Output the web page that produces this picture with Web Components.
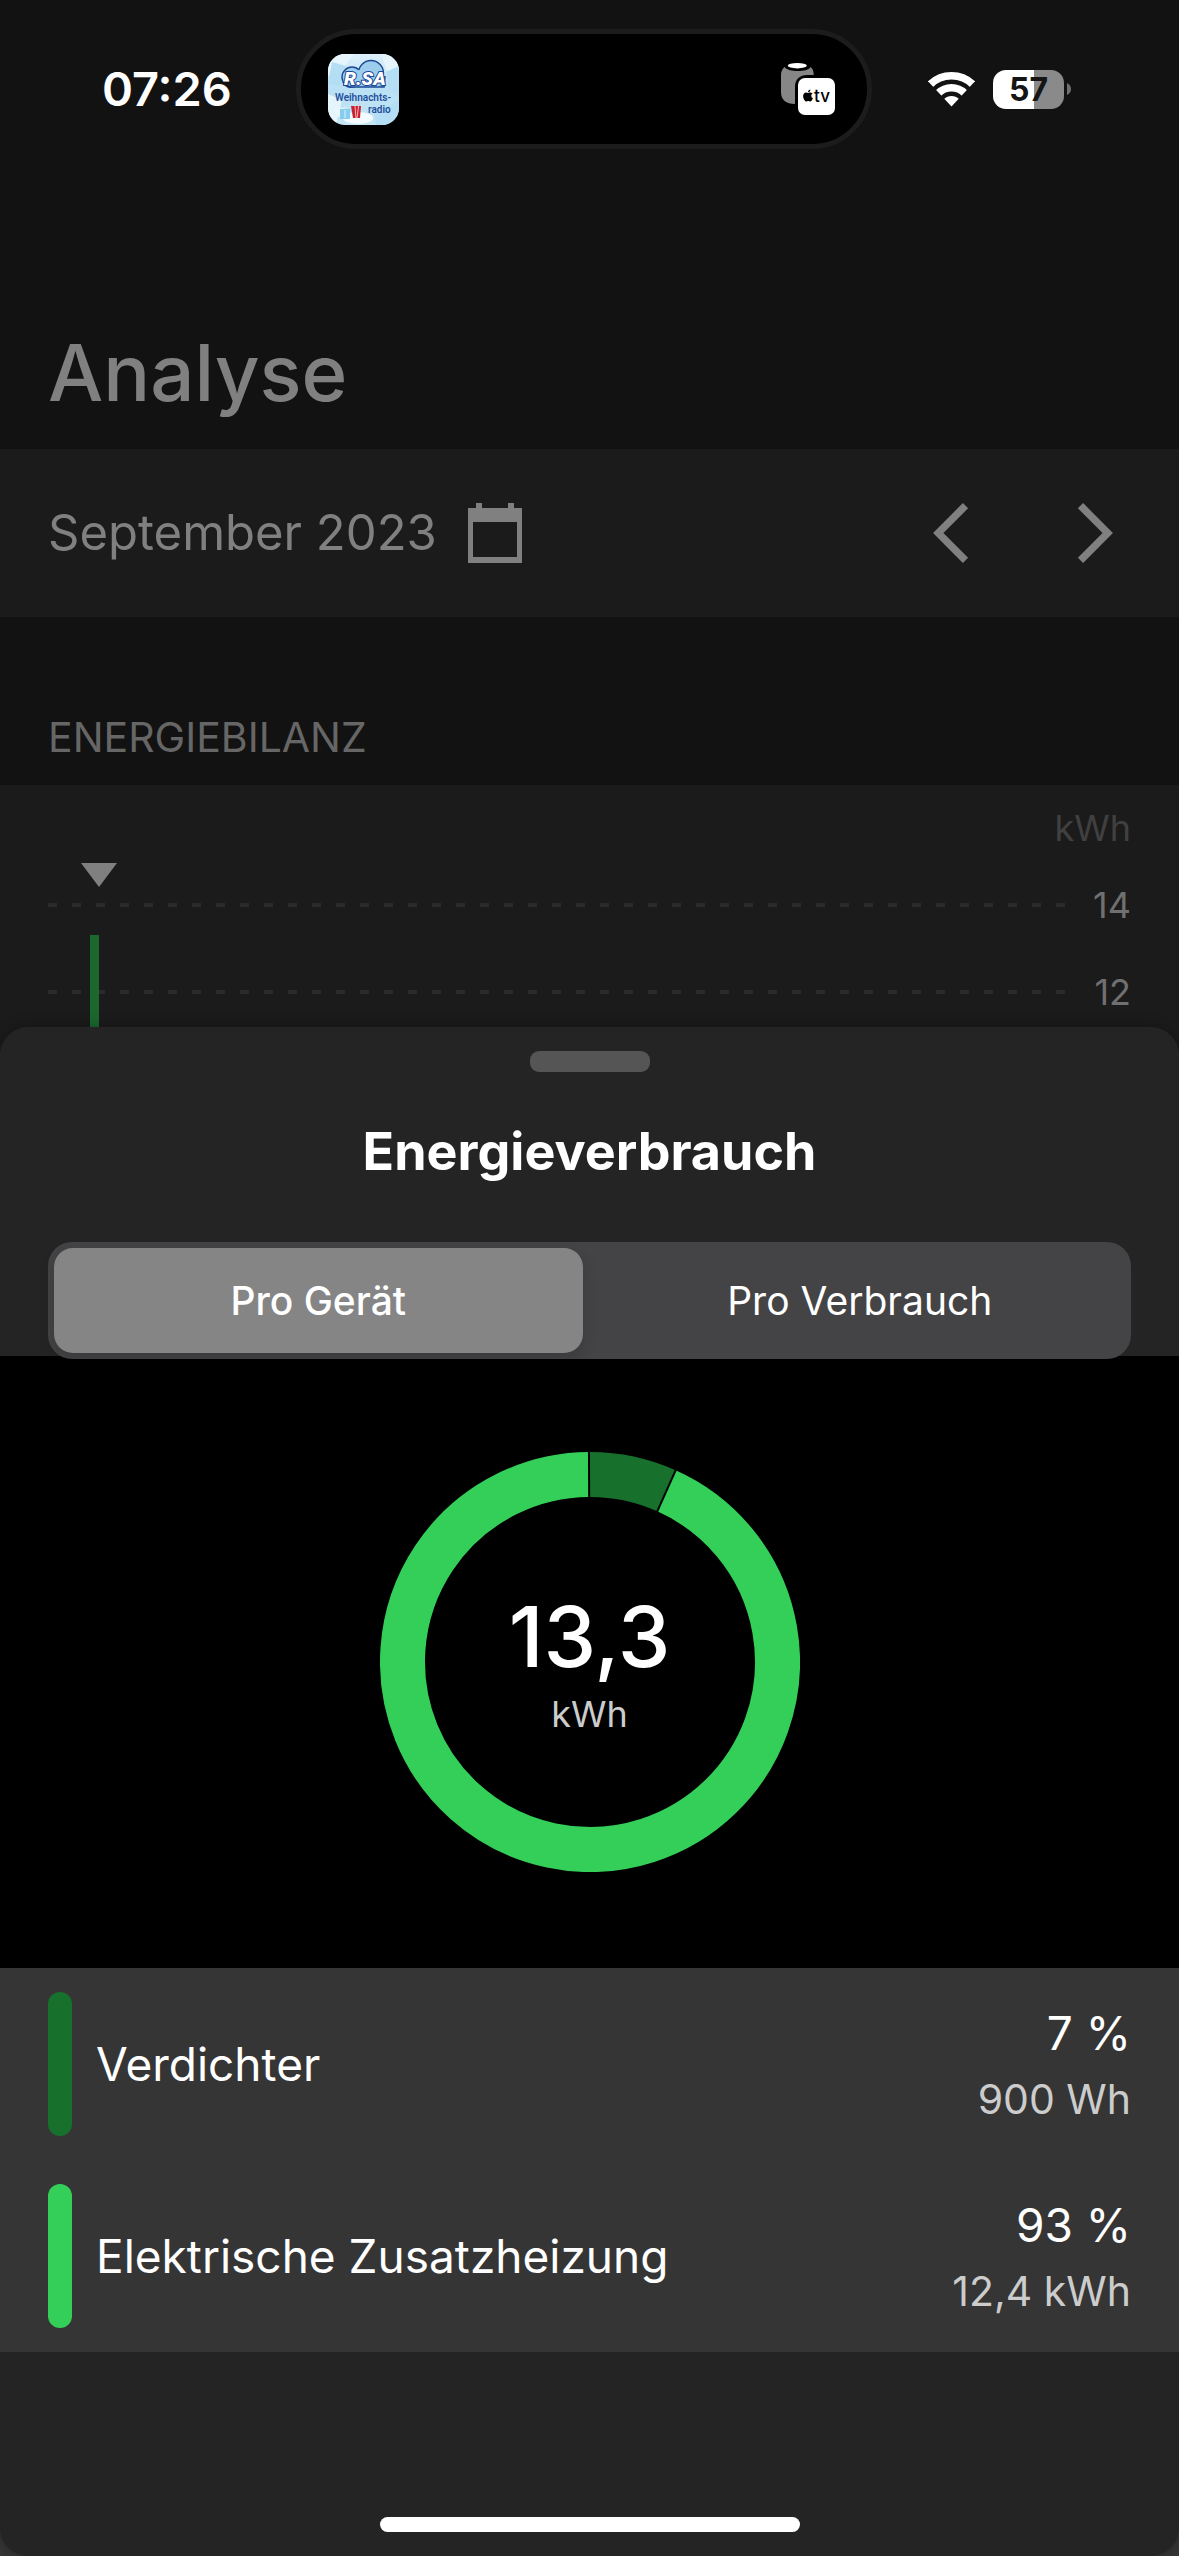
<!DOCTYPE html>
<html lang="de">
<head>
<meta charset="utf-8">
<meta name="viewport" content="width=device-width, initial-scale=1">
<title>Analyse</title>
<style>
  html, body { margin: 0; min-height: 100vh; background: #121212; }
  body { font-family: Inter, "Liberation Sans", sans-serif; color: #fff; }
</style>
</head>
<body>
<energy-app></energy-app>

<script>
const define = (name, html, setup) => {
  const tpl = document.createElement('template');
  tpl.innerHTML = html;
  customElements.define(name, class extends HTMLElement {
    connectedCallback() {
      if (this.shadowRoot) return;
      this.attachShadow({ mode: 'open' }).append(tpl.content.cloneNode(true));
      if (setup) setup(this, this.shadowRoot);
    }
  });
};

/* Album art of the running radio stream */
define('radio-art', `
<style>:host{display:block;width:71px;height:71px}svg{display:block}</style>
<svg width="71" height="71" viewBox="0 0 71 71" role="img" aria-label="R.SA Weihnachtsradio">
  <defs>
    <clipPath id="c"><rect width="71" height="71" rx="17"/></clipPath>
    <linearGradient id="g" x1="0" y1="0" x2="0" y2="1"><stop offset="0" stop-color="#dcf0fa"/><stop offset=".5" stop-color="#b9e0f4"/><stop offset="1" stop-color="#c4e6f5"/></linearGradient>
  </defs>
  <g clip-path="url(#c)">
    <rect width="71" height="71" fill="url(#g)"/>
    <path d="M0 0h26l-12 16L0 22zM54 0h17v18L58 16zM0 40l14 6-6 25H0z" fill="#e6f5fc"/>
    <path d="M4 8l14 4-6 20L0 30zM58 18l13-6v30l-10-8zM46 60l25-14v25H48z" fill="#b3def3"/>
    <ellipse cx="30" cy="64" rx="15" ry="6" fill="#f4fbfe"/>
    <path d="M5 55q10-4 16 3l-4 8q-8-2-12-11z" fill="#e9f6fc"/>
    <circle cx="43" cy="19" r="12.500" fill="#9dcdec" stroke="#1b4796" stroke-width="1.400"/>
    <circle cx="24" cy="23" r="10" fill="#9dcdec" stroke="#1b4796" stroke-width="1.400"/>
    <path d="M16 26q4 8 12 7h27q3-6 0-14L43 13 23 18z" fill="#9dcdec"/>
    <path d="M15 28q3 6 9 5h32l1-11" fill="none" stroke="#1b4796" stroke-width="1.600"/>
    <text x="16" y="31" font-family="Roboto, sans-serif" font-weight="900" font-style="italic" font-size="19" fill="#fff" stroke="#1b4796" stroke-width="2" paint-order="stroke">R.SA</text>
    <text x="7" y="47" font-family="Roboto, sans-serif" font-weight="600" font-size="10" fill="#23509c">Weihnachts-</text>
    <text x="40" y="59" font-family="Roboto, sans-serif" font-weight="600" font-size="10" fill="#23509c">radio</text>
    <path d="M12 55h10v10H12z" fill="#86cdf0"/><path d="M14 55q3-4 6 0M17 56v8" fill="none" stroke="#d9f1fb"/>
    <path d="M23 52h10l-1 12h-7z" fill="#c9202f"/><path d="M27 52l1 12M31 49l-2 15" stroke="#f2b9bd"/>
  </g>
</svg>`);

define('airplay-target', `
<style>:host{display:block;width:54px;height:52px}svg{display:block}</style>
<svg width="54" height="52" viewBox="0 0 54 52" role="img" aria-label="HomePod und Apple TV">
  <path d="M3.500 4C1 6 0 9 0 12v17c0 8 5 12 14 12V24c0-8 5-12 12-12h6.700c0-4-1-6-3-8-2 3-7 4-13 4S6 7 3.500 4z" fill="#868686"/>
  <ellipse cx="16.300" cy="2.700" rx="9.500" ry="2.700" fill="#fff"/>
  <rect x="17" y="15" width="37" height="37" rx="7" fill="#fff"/>
  <path transform="translate(21 26.500) scale(.5)" fill="#000" d="M12.152 6.896c-.948 0-2.415-1.078-3.960-1.040-2.040.027-3.910 1.183-4.961 3.014-2.117 3.675-.546 9.103 1.519 12.090 1.013 1.454 2.208 3.090 3.792 3.039 1.520-.065 2.090-.987 3.935-.987 1.831 0 2.350.987 3.960.948 1.637-.026 2.676-1.480 3.676-2.948 1.156-1.688 1.636-3.325 1.662-3.415-.039-.013-3.182-1.221-3.220-4.857-.026-3.040 2.480-4.494 2.597-4.559-1.429-2.090-3.623-2.324-4.390-2.376-2-.156-3.675 1.090-4.610 1.090zM15.530 3.830c.843-1.012 1.400-2.427 1.245-3.830-1.207.052-2.662.805-3.532 1.818-.780.896-1.454 2.338-1.273 3.714 1.338.104 2.715-.688 3.559-1.701"/>
  <text x="33" y="39" font-family="Inter, sans-serif" font-weight="500" font-size="17" fill="#000">tv</text>
</svg>`);

define('status-bar', `
<style>
  :host{display:grid;grid-template-columns:296fr 576px 307fr;align-items:center;height:178px}
  time{padding-left:102px;font-size:47px;line-height:56px;font-weight:600}
  .island{box-sizing:border-box;height:120px;border:5px solid #1c1c1c;border-radius:60px;background:#000;
    display:flex;align-items:center;justify-content:space-between;padding:0 32px 0 27px}
  .icons{display:flex;align-items:center;padding-left:56px}
  .icons svg{display:block}
  .level{margin-left:18px;width:71px;height:39px;border-radius:13px;background:linear-gradient(90deg,#fff 58%,#8a8a8a 58%);
    color:#151515;font-size:32px;line-height:39px;font-weight:700;text-align:center}
  .nub{margin-left:3px}
</style>
<time>07:26</time>
<div class="island"><radio-art></radio-art><airplay-target></airplay-target></div>
<div class="icons">
  <svg width="47" height="35" viewBox="0 0 47 35" role="img" aria-label="WLAN">
    <clipPath id="w"><path d="M23.500 34.500L-13.800-5.500H60.800z"/></clipPath>
    <g clip-path="url(#w)" fill="none" stroke="#fff">
      <circle cx="23.500" cy="34.500" r="30.700" stroke-width="7.600"/>
      <circle cx="23.500" cy="34.500" r="18.700" stroke-width="7.600"/>
      <circle cx="23.500" cy="34.500" r="10.600" fill="#fff" stroke="none"/>
    </g>
  </svg>
  <div class="level">57</div>
  <svg class="nub" width="5" height="12" viewBox="0 0 5 12"><path d="M0 0q4 2 4 6t-4 6z" fill="#6f6f6f"/></svg>
</div>`);

define('month-picker', `
<style>
  :host{display:flex;align-items:center;justify-content:space-between;height:168px;padding:0 48px;background:#1b1b1b;color:#808080}
  button{display:flex;align-items:center;gap:30px;margin:0;padding:0;border:0;background:none;color:inherit;font:inherit;font-size:49px;line-height:60px}
  nav{display:flex;gap:108px;padding-right:18px}
  svg{display:block}
</style>
<button><slot></slot>
  <svg width="56" height="60" viewBox="0 0 56 60" fill="currentColor"><path fill-rule="evenodd" d="M1 5h8V0h6v5h26V0h6v5h8v55H1zM6 19v35h44V19z"/></svg>
</button>
<nav>
  <button aria-label="Vorheriger Monat"><svg width="36" height="60" viewBox="0 0 36 60"><path d="M32.500 2.700L5.300 30l27.200 27.300" fill="none" stroke="currentColor" stroke-width="7.400"/></svg></button>
  <button aria-label="Nächster Monat"><svg width="36" height="60" viewBox="0 0 36 60"><path d="M3.500 2.700L30.700 30 3.500 57.300" fill="none" stroke="currentColor" stroke-width="7.400"/></svg></button>
</nav>`);

define('balance-chart', `
<style>
  :host{display:block;background:#1b1b1b;padding:23px 48px 0}
  .unit{margin:0;text-align:right;font-size:36px;line-height:40px;color:#404040}
  .plot{position:relative;margin-top:13px}
  .row{display:grid;grid-template-columns:1fr 66px;align-items:center;height:87px;text-align:right;font-size:36px;color:#707070}
  .row i{height:4px;background:repeating-linear-gradient(90deg,#2b2b2b 0 9px,transparent 9px 24px)}
  .marker{position:absolute;left:33px;top:2px;display:block}
  .bar{position:absolute;left:42px;top:74px;bottom:0;width:9px;background:#1a682d}
</style>
<p class="unit">kWh</p>
<div class="plot">
  <div class="row"><i></i><span>14</span></div>
  <div class="row"><i></i><span>12</span></div>
  <svg class="marker" width="36" height="24" viewBox="0 0 36 24"><path d="M0 0h36L18 24z" fill="#808080"/></svg>
  <div class="bar"></div>
</div>`);

define('segmented-control', `
<style>
  :host{display:grid;grid-template-columns:1fr 1fr;padding:6px 0;border-radius:24px;background:#444446}
  button{margin:0 7px 0 6px;padding:0;height:105px;border:0;border-radius:19px;background:none;color:#fff;font:inherit;font-size:39px;font-weight:500}
  button[aria-pressed=true]{background:#858585;box-shadow:0 6px 16px rgba(0,0,0,.16)}
  button[aria-pressed=false]{font-weight:400}
</style>
<button aria-pressed="true">Pro Gerät</button><button aria-pressed="false">Pro Verbrauch</button>`,
(host, root) => {
  const all = [...root.querySelectorAll('button')];
  all.forEach(b => b.addEventListener('click', () => all.forEach(o => o.setAttribute('aria-pressed', o === b))));
});

define('usage-donut', `
<style>
  :host{display:grid;place-items:center;padding:96px 0;background:#000}
  svg,.label{grid-area:1/1}
  svg{display:block}
  .label{text-align:center}
  .value{font-size:84px;line-height:104px;font-weight:500}
  .unit{font-size:36px;line-height:50px;color:#ccc}
</style>
<svg width="420" height="420" viewBox="0 0 420 420"></svg>
<div class="label"><div class="value"><slot></slot></div><div class="unit">kWh</div></div>`,
(host, root) => {
  const svg = root.querySelector('svg'), C = 210, R = 187.5;
  const parts = host.getAttribute('parts').split(',').map(Number);
  const total = parts.reduce((a, b) => a + b, 0);
  const pt = (t, r) => (C + r * Math.sin(t)) + ' ' + (C - r * Math.cos(t));
  let at = -0.005, arcs = '', gaps = '';
  parts.forEach((v, i) => {
    const end = at + v / total * 2 * Math.PI;
    arcs += `<path d="M${pt(at, R)}A${R} ${R} 0 ${end - at > Math.PI ? 1 : 0} 1 ${pt(end, R)}" fill="none" stroke="${['#18702d', '#34cf59'][i]}" stroke-width="45"/>`;
    gaps += `<path d="M${pt(at, 160)}L${pt(at, 214)}" stroke="#000" stroke-width="2"/>`;
    at = end;
  });
  svg.innerHTML = arcs + gaps;
});

define('usage-row', `
<style>
  :host{display:flex;align-items:center;gap:24px;padding:24px 48px;background:#353535}
  .swatch{width:24px;height:144px;border-radius:12px;background:var(--swatch)}
  .name{flex:1;font-size:46px;line-height:60px}
  .figures{padding-top:3px;text-align:right;line-height:66px}
  .share{font-size:46px}
  .amount{font-size:41px;color:#ccc}
</style>
<div class="swatch"></div>
<div class="name"><slot></slot></div>
<div class="figures"><div class="share"><slot name="share"></slot></div><div class="amount"><slot name="amount"></slot></div></div>`);

define('bottom-sheet', `
<style>
  :host{display:block;background:linear-gradient(transparent 50%,#353535 50%)}
  .sheet{display:flex;flex-direction:column;min-height:1529px;border-radius:28px;background:#242424;box-shadow:0 0 14px rgba(0,0,0,.3);clip-path:inset(-20px 0 0 0)}
  .grip{align-self:center;margin-top:24px;width:120px;height:21px;border-radius:9px;background:#555}
  h2{margin:48px 0 58px;text-align:center;font-size:52px;line-height:64px;font-weight:700}
  segmented-control{position:relative;z-index:1;margin:0 48px -3px}
  .home{align-self:center;margin:auto 0 24px;width:420px;height:15px;border-radius:8px;background:#fff}
</style>
<section class="sheet">
  <div class="grip"></div>
  <h2>Energieverbrauch</h2>
  <segmented-control></segmented-control>
  <usage-donut parts="0.9,12.4">13,3</usage-donut>
  <usage-row style="--swatch:#18702d">Verdichter<span slot="share">7 %</span><span slot="amount">900 Wh</span></usage-row>
  <usage-row style="--swatch:#34cf59">Elektrische Zusatzheizung<span slot="share">93 %</span><span slot="amount">12,4 kWh</span></usage-row>
  <div class="home"></div>
</section>`);

define('energy-app', `
<style>
  :host{display:grid;min-height:100vh;background:#1b1b1b}
  .screen,bottom-sheet{grid-area:1/1;min-width:0}
  .screen{align-self:start;background:#121212}
  bottom-sheet{align-self:end}
  h1{margin:0;padding:147px 48px 28px;font-size:78px;line-height:96px;font-weight:500;color:#808080}
  h2{margin:0;padding:96px 48px 24px;font-size:41px;line-height:48px;font-weight:400;color:#666}
</style>
<main class="screen">
  <status-bar></status-bar>
  <h1>Analyse</h1>
  <month-picker>September 2023</month-picker>
  <h2>ENERGIEBILANZ</h2>
  <balance-chart></balance-chart>
</main>
<bottom-sheet></bottom-sheet>`);
</script>
</body>
</html>
